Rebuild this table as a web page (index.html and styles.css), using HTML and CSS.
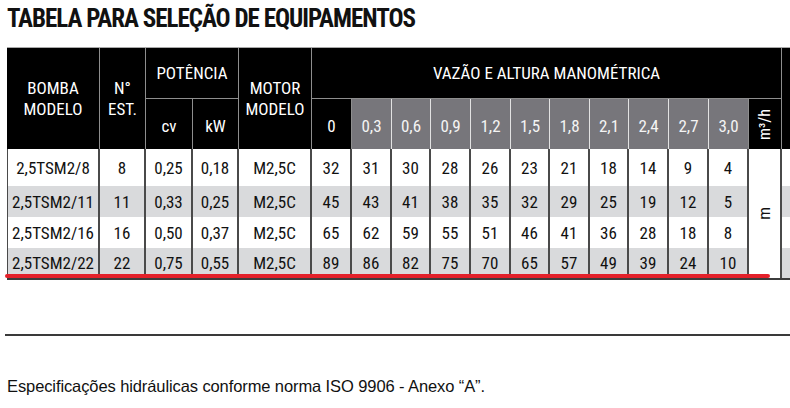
FILE: index.html
```html
<!DOCTYPE html>
<html lang="pt">
<head>
<meta charset="utf-8">
<title>Tabela para seleção de equipamentos</title>
<link rel="stylesheet" href="styles.css">
</head>
<body>
<div class="page">
  <h1 class="title">TABELA PARA SELEÇÃO DE EQUIPAMENTOS</h1>
  <div class="table-wrap">
    <div class="grid">
      <div class="h h-bomba">BOMBA<br>MODELO</div>
      <div class="h h-est">N°<br>EST.</div>
      <div class="h h-pot">POTÊNCIA</div>
      <div class="h h-motor">MOTOR<br>MODELO</div>
      <div class="h h-vazao">VAZÃO E ALTURA MANOMÉTRICA</div>
      <div class="h h-extra"></div>

      <div class="h h-sub">cv</div>
      <div class="h h-sub">kW</div>
      <div class="h h-sub">0</div>
      <div class="h g">0,3</div>
      <div class="h g">0,6</div>
      <div class="h g">0,9</div>
      <div class="h g">1,2</div>
      <div class="h g">1,5</div>
      <div class="h g">1,8</div>
      <div class="h g">2,1</div>
      <div class="h g">2,4</div>
      <div class="h g">2,7</div>
      <div class="h g g-last">3,0</div>
      <div class="h h-unit"><span class="vert">m³/h</span></div>

      <div class="c r1 first">2,5TSM2/8</div>
      <div class="c r1">8</div>
      <div class="c r1">0,25</div>
      <div class="c r1">0,18</div>
      <div class="c r1">M2,5C</div>
      <div class="c r1">32</div>
      <div class="c r1">31</div>
      <div class="c r1">30</div>
      <div class="c r1">28</div>
      <div class="c r1">26</div>
      <div class="c r1">23</div>
      <div class="c r1">21</div>
      <div class="c r1">18</div>
      <div class="c r1">14</div>
      <div class="c r1">9</div>
      <div class="c r1">4</div>
      <div class="c unit-m"><span class="vert">m</span></div>
      <div class="c r1 ex"></div>

      <div class="c r2 first">2,5TSM2/11</div>
      <div class="c r2">11</div>
      <div class="c r2">0,33</div>
      <div class="c r2">0,25</div>
      <div class="c r2">M2,5C</div>
      <div class="c r2">45</div>
      <div class="c r2">43</div>
      <div class="c r2">41</div>
      <div class="c r2">38</div>
      <div class="c r2">35</div>
      <div class="c r2">32</div>
      <div class="c r2">29</div>
      <div class="c r2">25</div>
      <div class="c r2">19</div>
      <div class="c r2">12</div>
      <div class="c r2">5</div>
      <div class="c r2 ex"></div>

      <div class="c r3 first">2,5TSM2/16</div>
      <div class="c r3">16</div>
      <div class="c r3">0,50</div>
      <div class="c r3">0,37</div>
      <div class="c r3">M2,5C</div>
      <div class="c r3">65</div>
      <div class="c r3">62</div>
      <div class="c r3">59</div>
      <div class="c r3">55</div>
      <div class="c r3">51</div>
      <div class="c r3">46</div>
      <div class="c r3">41</div>
      <div class="c r3">36</div>
      <div class="c r3">28</div>
      <div class="c r3">18</div>
      <div class="c r3">8</div>
      <div class="c r3 ex"></div>

      <div class="c r4 first">2,5TSM2/22</div>
      <div class="c r4">22</div>
      <div class="c r4">0,75</div>
      <div class="c r4">0,55</div>
      <div class="c r4">M2,5C</div>
      <div class="c r4">89</div>
      <div class="c r4">86</div>
      <div class="c r4">82</div>
      <div class="c r4">75</div>
      <div class="c r4">70</div>
      <div class="c r4">65</div>
      <div class="c r4">57</div>
      <div class="c r4">49</div>
      <div class="c r4">39</div>
      <div class="c r4">24</div>
      <div class="c r4">10</div>
      <div class="c r4 ex"></div>
    </div>
    <div class="redline"></div>
  </div>
  <div class="rule"></div>
  <p class="note">Especificações hidráulicas conforme norma ISO 9906 - Anexo “A”.</p>
</div>
</body>
</html>
```

FILE: styles.css
```css
html, body {
  margin: 0;
  padding: 0;
  background: #ffffff;
  overflow: hidden;
}

.page {
  width: 790px;
  height: 408px;
  overflow: hidden;
  font-family: "Roboto Condensed", "DejaVu Sans Condensed", sans-serif;
  color: #111111;
}

.title {
  margin: 0;
  padding: 5px 0 0 7px;
  height: 47px;
  box-sizing: border-box;
  font-size: 25px;
  line-height: 28px;
  font-weight: bold;
  letter-spacing: -1px;
  color: #111111;
  white-space: nowrap;
}

.table-wrap {
  position: relative;
  width: 790px;
  overflow: hidden;
  padding-left: 7px;
  box-sizing: border-box;
}

.grid {
  display: grid;
  grid-template-columns: 93px 46px 47px 46px 73px 40px 40px 39px 40px 40px 39px 40px 39px 40px 40px 40px 33px 20px;
  grid-template-rows: 51px 50px 37px 31px 31px 30px;
  width: 795px;
  border-top: 1px solid #a9a9a9;
  border-bottom: 2px solid #3c3c3c;
  font-size: 17px;
}

.h {
  background: #000000;
  color: #ffffff;
  display: flex;
  align-items: center;
  justify-content: center;
  text-align: center;
  line-height: 21px;
  border-right: 1px solid #8e8e8e;
  box-sizing: border-box;
}

.h-bomba { grid-column: 1; grid-row: 1 / span 2; }
.h-est { grid-column: 2; grid-row: 1 / span 2; }
.h-pot { grid-column: 3 / span 2; grid-row: 1; border-bottom: 1px solid #8e8e8e; }
.h-motor { grid-column: 5; grid-row: 1 / span 2; }
.h-vazao { grid-column: 6 / span 12; grid-row: 1; border-bottom: 1px solid #8e8e8e; }
.h-extra { grid-column: 18; grid-row: 1 / span 2; border-right: none; }
.h-sub { padding-top: 4px; }

.g {
  background: #77767b;
  color: #f4f4f4;
  border-right: 1px solid #e2e2e2;
  padding-top: 4px;
}

.g-last { border-right: 1px solid #8e8e8e; }

.h-unit {
  font-size: 16px;
}

.vert {
  writing-mode: vertical-rl;
  transform: rotate(180deg);
  line-height: 1;
}

.c {
  display: flex;
  align-items: center;
  justify-content: center;
  border-right: 2px solid #4a4a4a;
  box-sizing: border-box;
  background: #ffffff;
}

.first { border-left: 1px solid #4a4a4a; }
.r2, .r4 { background: #d9dadc; }

.unit-m {
  grid-column: 17;
  grid-row: 3 / span 4;
  background: #ffffff;
  font-size: 17px;
}

.ex { border-right: none; }

.redline {
  position: absolute;
  left: 5px;
  top: 227px;
  width: 765px;
  height: 4px;
  border-radius: 2px;
  background: #e3202a;
}

.rule {
  margin: 54px 0 0 5px;
  height: 2px;
  background: #3a3a3a;
}

.note {
  margin: 41px 0 0 7px;
  font-family: "Liberation Sans", Arial, sans-serif;
  font-size: 16.5px;
  line-height: 19px;
  letter-spacing: -0.1px;
  color: #111111;
}
```
